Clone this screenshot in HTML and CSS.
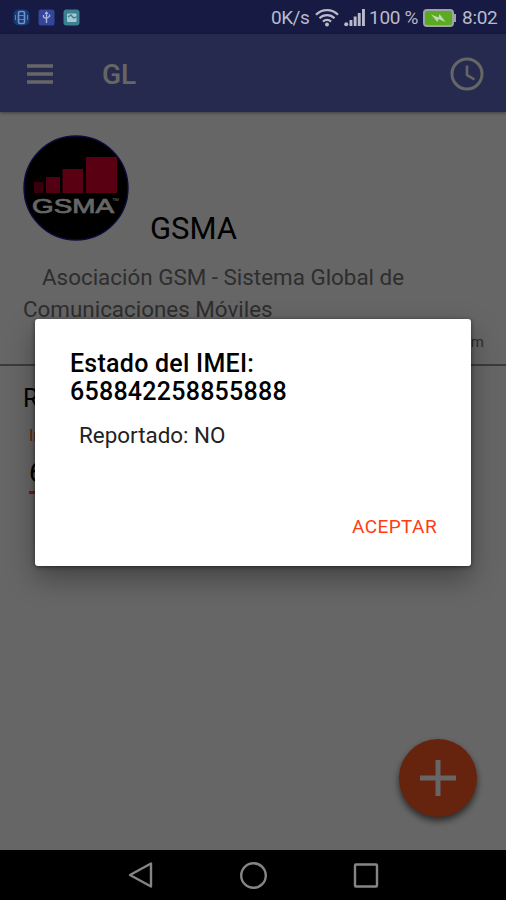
FILE: index.html
```html
<!DOCTYPE html>
<html lang="es">
<head>
  <meta charset="UTF-8">
  <title>GL - GSMA</title>
  <meta name="viewport" content="width=device-width, initial-scale=1">
  <link rel="stylesheet" href="styles.css">
</head>
<body>
  <div class="phone">
    <div class="status">
      <div class="notifications">
        <svg width="17" height="17" viewBox="0 0 17 17">
          <rect x=".5" y=".5" width="16" height="16" rx="5" fill="#173b77"/>
          <rect x="5.5" y="2.500" width="6" height="12" rx="1.500" fill="none" stroke="#7593c2" stroke-width="1.600"/>
          <path d="M6 6.500h5M6 10.500h5M2.500 6v5M14.500 6v5" fill="none" stroke="#5c80b7"/>
        </svg>
        <svg width="17" height="17" viewBox="0 0 17 17">
          <rect x=".5" y=".5" width="16" height="16" rx="2.500" fill="#34459a"/>
          <path d="M8.500 3v11M5.500 6v2l3 2M11.500 5.500v2l-3 2" fill="none" stroke="#a9b5d8" stroke-width="1.400"/>
          <path d="M6.500 5l2-3 2 3z" fill="#a9b5d8"/>
        </svg>
        <svg width="17" height="17" viewBox="0 0 17 17">
          <rect x=".5" y=".5" width="16" height="16" rx="3" fill="#3b8194"/>
          <rect x="4" y="4.500" width="9.500" height="8.500" rx="1" fill="#a9c9cf"/>
          <path d="M5 8l3-2 2.500 3 3-1" fill="none" stroke="#3b8194" stroke-width="1.500"/>
        </svg>
      </div>
      <div class="indicators">
        <span class="speed">0K/s</span>
        <svg class="wifi" width="24" height="19" viewBox="0 0 24 19">
          <g fill="none" stroke="#b9bbcb" stroke-width="2.300">
            <path d="M1 6.800a15.500 15.500 0 0 1 22 0"/>
            <path d="M4.500 10.300a10.600 10.600 0 0 1 15 0"/>
            <path d="M8 13.600a5.700 5.700 0 0 1 8 0"/>
          </g>
          <circle cx="12" cy="16.500" r="2" fill="#b9bbcb"/>
        </svg>
        <svg class="signal" width="22" height="19" viewBox="0 0 22 19">
          <circle cx="2.200" cy="16.200" r="2" fill="#b9bbcb"/>
          <path d="M5.500 12h2.900v6H5.500zM9.700 8.500h2.900V18H9.700zM13.800 5h2.900v13h-2.900zM18 1h2.900v17H18z" fill="#b9bbcb"/>
        </svg>
        <span class="percent">100 %</span>
        <svg class="battery" width="33" height="18" viewBox="0 0 33 18">
          <rect x="1" y="1" width="29" height="16" rx="3" fill="#5bab22" stroke="#9fa3a8" stroke-width="2"/>
          <path d="M31 5h2v8h-2z" fill="#9fa3a8"/>
          <path d="M8 5.500l7.500 3 1-3.500 6 8-7-3-1 3z" fill="#c5d6b8"/>
        </svg>
        <span class="time">8:02</span>
      </div>
    </div>

    <div class="screen">
      <header class="appbar">
        <svg class="menu" width="26" height="20" viewBox="0 0 26 20">
          <path d="M0 2h26M0 10h26M0 18h26" stroke="#fff" stroke-width="3.400"/>
        </svg>
        <h1>GL</h1>
        <svg class="clock" width="34" height="34" viewBox="0 0 34 34">
          <g fill="none" stroke="#fff" stroke-width="3">
            <circle cx="17" cy="17" r="15"/>
            <path d="M17 8.500V18l7.500 4.500" stroke-width="2.600"/>
          </g>
        </svg>
      </header>

      <section class="company">
        <div class="company-top">
          <svg class="logo" width="106" height="106" viewBox="0 0 106 106">
            <circle cx="53" cy="53" r="52" fill="#000" stroke="#1c1c96" stroke-width="1.400"/>
            <path d="M11 47h9v11h-9z" fill="#900020"/>
            <path d="M23 42h14v16H23z" fill="#d00030"/>
            <path d="M39.500 34H60v24H39.500zM63 22h31v36H63z" fill="#e00030"/>
            <text x="9" y="78" textLength="82" lengthAdjust="spacingAndGlyphs">GSMA</text>
            <text class="tm" x="89" y="68">™</text>
          </svg>
          <h2>GSMA</h2>
        </div>
        <p class="description">Asociación GSM - Sistema Global de Comunicaciones Móviles</p>
        <p class="website">m</p>
      </section>

      <section class="query">
        <h3>R</h3>
        <label for="imei">In</label>
        <input type="text" id="imei" value="6">
      </section>

      <button class="fab">
        <svg width="36" height="36" viewBox="0 0 36 36">
          <path d="M18 0v36M0 18h36" stroke="#fff" stroke-width="5"/>
        </svg>
      </button>

      <div class="overlay">
        <div class="dialog">
          <h2>Estado del IMEI: 658842258855888</h2>
          <p>Reportado: NO</p>
          <button>ACEPTAR</button>
        </div>
      </div>
    </div>

    <nav class="navbar">
      <svg width="26" height="28" viewBox="0 0 26 28">
        <path d="M24 2.500v23L3 14z"/>
      </svg>
      <svg width="28" height="28" viewBox="0 0 28 28">
        <circle cx="14.500" cy="14.500" r="12.300"/>
      </svg>
      <svg width="26" height="26" viewBox="0 0 26 26">
        <rect x="2" y="2.500" width="22" height="22" rx="1"/>
      </svg>
    </nav>
  </div>
</body>
</html>
```

FILE: styles.css
```css
* {
  box-sizing: border-box;
}
body {
  margin: 0;
  font-family: Roboto, sans-serif;
  color: #000;
}
h1, h2, h3, p {
  margin: 0;
  font-weight: normal;
}
button {
  font-family: inherit;
  border: none;
  cursor: pointer;
}
.phone {
  height: 900px;
  display: flex;
  flex-direction: column;
  overflow: hidden;
}

/* status bar */
.status {
  height: 34px;
  padding: 0 8px 0 13px;
  background: #171a42;
  color: #b9bbcb;
  display: flex;
  align-items: center;
  justify-content: space-between;
  font-size: 19px;
}
.notifications,
.indicators {
  display: flex;
  align-items: center;
}
.notifications {
  gap: 8px;
}
.indicators span {
  white-space: nowrap;
}
.speed {
  width: 45px;
  letter-spacing: -0.5px;
}
.wifi {
  margin-left: -1px;
}
.signal {
  margin: 0 3px 0 5px;
}
.percent {
  width: 54px;
  letter-spacing: -0.3px;
}
.battery {
  margin-top: 2px;
}
.time {
  width: 36px;
  margin-left: 6px;
  letter-spacing: -0.3px;
}

/* app */
.screen {
  position: relative;
  flex: 1;
  background: #fff;
}
.appbar {
  height: 78px;
  padding: 1px 22px 0 27px;
  background: #5f69c3;
  color: #fff;
  display: flex;
  align-items: center;
  box-shadow: 0 1px 3px rgba(0, 0, 0, 0.4);
}
.appbar h1 {
  margin-left: 49px;
  padding-top: 2px;
  font-size: 28px;
  font-weight: 500;
}
.clock {
  margin-left: auto;
}
.company {
  height: 254px;
  padding: 23px 22px 0 23px;
  border-bottom: 2px solid #949494;
}
.company-top {
  display: flex;
  align-items: flex-end;
}
.company-top h2 {
  margin-left: 21px;
  font-size: 31px;
  line-height: 24px;
}
.logo text {
  font-family: "Liberation Sans", sans-serif;
  font-size: 20px;
  fill: #fff;
  stroke: #fff;
  stroke-width: 0.7px;
}
.logo .tm {
  font-size: 7px;
  stroke: none;
}
.description {
  margin-top: 20px;
  font-size: 22.4px;
  line-height: 32px;
  text-indent: 19px;
  color: #737373;
}
.website {
  margin-top: 7px;
  font-size: 15px;
  line-height: 20px;
  text-align: right;
  color: #737373;
}
.query {
  padding: 18px 29px 0;
}
.query h3 {
  margin-left: -6px;
  font-size: 25px;
  line-height: 30px;
}
.query label {
  display: block;
  margin-top: 12px;
  font-size: 16px;
  line-height: 20px;
  color: #ff5722;
}
.query input {
  width: 300px;
  height: 48px;
  padding: 8px 0 0;
  border: none;
  border-bottom: 3px solid #ff5722;
  background: none;
  font: 27px Roboto, sans-serif;
}
.fab {
  position: absolute;
  right: 29px;
  bottom: 33px;
  width: 78px;
  height: 78px;
  border-radius: 50%;
  padding: 0;
  background: #ff5722;
  display: flex;
  align-items: center;
  justify-content: center;
  box-shadow: 0 4px 7px rgba(0, 0, 0, 0.6);
}

/* dialog */
.overlay {
  position: absolute;
  inset: 0;
  background: rgba(0, 0, 0, 0.6);
  display: flex;
  align-items: center;
  justify-content: center;
}
.dialog {
  width: 436px;
  height: 247px;
  padding: 31px 24px 19px 34px;
  background: #fff;
  border-radius: 3px;
  box-shadow: 0 12px 28px rgba(0, 0, 0, 0.35), 0 1px 4px rgba(0, 0, 0, 0.5);
  display: flex;
  flex-direction: column;
}
.dialog h2 {
  width: 260px;
  padding-left: 1px;
  font-size: 25px;
  font-weight: 500;
  line-height: 28px;
  letter-spacing: 0.25px;
}
.dialog p {
  margin: 15px 0 0 10px;
  font-size: 22.4px;
  line-height: 28px;
  color: #222;
}
.dialog button {
  margin-top: auto;
  align-self: flex-end;
  padding: 8px 10px;
  background: none;
  color: #ff3d14;
  font-size: 19px;
  line-height: 24px;
  letter-spacing: 0.4px;
}

/* system buttons */
.navbar {
  height: 50px;
  background: #000;
  display: flex;
  align-items: center;
  justify-content: center;
  gap: 86px;
}
.navbar svg {
  fill: none;
  stroke: #858585;
  stroke-width: 2.4;
  stroke-linejoin: round;
}
```
